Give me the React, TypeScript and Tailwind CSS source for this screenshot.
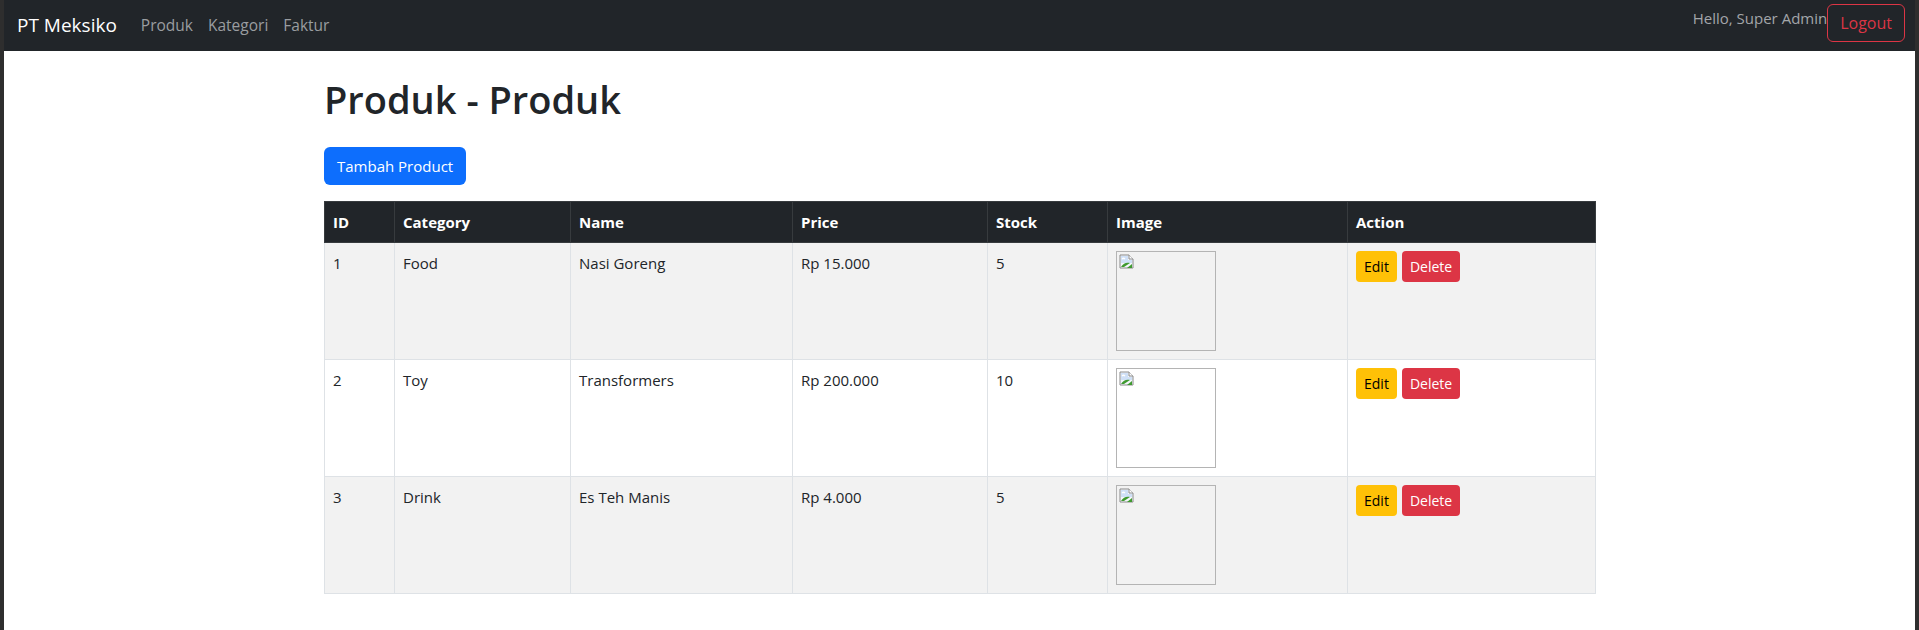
import React from "react";

interface Produk {
  id: number;
  category: string;
  name: string;
  price: string;
  stock: number;
}

const produk: Produk[] = [
  { id: 1, category: "Food", name: "Nasi Goreng", price: "Rp 15.000", stock: 5 },
  { id: 2, category: "Toy", name: "Transformers", price: "Rp 200.000", stock: 10 },
  { id: 3, category: "Drink", name: "Es Teh Manis", price: "Rp 4.000", stock: 5 },
];

// icon gambar rusak (broken image)
function BrokenImage() {
  return (
    <svg width="16" height="16" viewBox="0 0 16 16" className="absolute left-[2px] top-[2px]">
      <path d="M1 1h9l4 4v9H1z" fill="#f4f7fb" stroke="#8a8a8a" strokeWidth="1" />
      <path d="M10 1v4h4" fill="#fff" stroke="#8a8a8a" strokeWidth="1" />
      <path d="M2 2h7v4h4v3L2 9z" fill="#cfe0f7" />
      <path d="M3 5c1-1 2-1 3 0" fill="none" stroke="#ffffff" strokeWidth="1.2" />
      <path d="M2 13c2-4 6-5 9-4l-6 4z" fill="#3f9a2f" />
      <path d="M8 14l5-4v4z" fill="#3f9a2f" />
    </svg>
  );
}

export default function App() {
  return (
    <div
      className="min-h-screen bg-white border-x-4 border-[#2e2e2e] text-[#212529]"
      style={{ fontFamily: '"Open Sans", "Noto Sans", sans-serif' }}
    >
      {/* Navbar */}
      <nav className="h-[51px] bg-[#212529] flex items-start justify-between pl-[13px] pr-[10px]">
        <div className="flex items-center h-full">
          <span className="text-[19px] text-white mr-[24px]">PT Meksiko</span>
          <a className="text-[15.5px] text-[#9a9da0] mr-[15px]">Produk</a>
          <a className="text-[15.5px] text-[#9a9da0] mr-[15px]">Kategori</a>
          <a className="text-[15.5px] text-[#9a9da0]">Faktur</a>
        </div>
        <div className="flex items-start pt-[4px]">
          <span className="text-[15px] text-[#a3a6a9] mt-[2px] leading-[24px]">Hello, Super Admin</span>
          <button className="h-[38px] px-[12px] border border-[#dc3545] text-[#dc3545] rounded-[6px] text-[16px]">
            Logout
          </button>
        </div>
      </nav>

      {/* Konten */}
      <div className="ml-[320px] w-[1271px] pt-[24px]">
        <h1 className="text-[38px] font-semibold leading-[48px] mb-[24px]">Produk - Produk</h1>
        <button className="h-[38px] px-[13px] bg-[#0d6efd] text-white rounded-[6px] text-[15px] mb-[16px]">
          Tambah Product
        </button>

        <table className="w-[1271px] table-fixed border-collapse text-[15px]">
          <colgroup>
            <col className="w-[70px]" />
            <col className="w-[176px]" />
            <col className="w-[222px]" />
            <col className="w-[195px]" />
            <col className="w-[120px]" />
            <col className="w-[240px]" />
            <col className="w-[248px]" />
          </colgroup>
          <thead>
            <tr className="bg-[#212529] text-white text-left">
              {["ID", "Category", "Name", "Price", "Stock", "Image", "Action"].map((h) => (
                <th key={h} className="border border-[#373b3e] px-2 py-2 leading-[24px] font-bold">
                  {h}
                </th>
              ))}
            </tr>
          </thead>
          <tbody>
            {produk.map((p, i) => (
              <tr key={p.id} className={i % 2 === 0 ? "bg-[#f2f2f2]" : "bg-white"}>
                <td className="border border-[#dee2e6] p-2 align-top leading-[24px]">{p.id}</td>
                <td className="border border-[#dee2e6] p-2 align-top leading-[24px]">{p.category}</td>
                <td className="border border-[#dee2e6] p-2 align-top leading-[24px]">{p.name}</td>
                <td className="border border-[#dee2e6] p-2 align-top leading-[24px]">{p.price}</td>
                <td className="border border-[#dee2e6] p-2 align-top leading-[24px]">{p.stock}</td>
                <td className="border border-[#dee2e6] p-2 align-top">
                  <div className="relative w-[100px] h-[100px] border border-[#b4b4b4]">
                    <BrokenImage />
                  </div>
                </td>
                <td className="border border-[#dee2e6] p-2 align-top">
                  <div className="flex gap-[5px]">
                    <button className="h-[31px] px-[8px] bg-[#ffc107] text-black rounded-[4px] text-[14px]">
                      Edit
                    </button>
                    <button className="h-[31px] px-[8px] bg-[#dc3545] text-white rounded-[4px] text-[14px]">
                      Delete
                    </button>
                  </div>
                </td>
              </tr>
            ))}
          </tbody>
        </table>
      </div>
    </div>
  );
}
